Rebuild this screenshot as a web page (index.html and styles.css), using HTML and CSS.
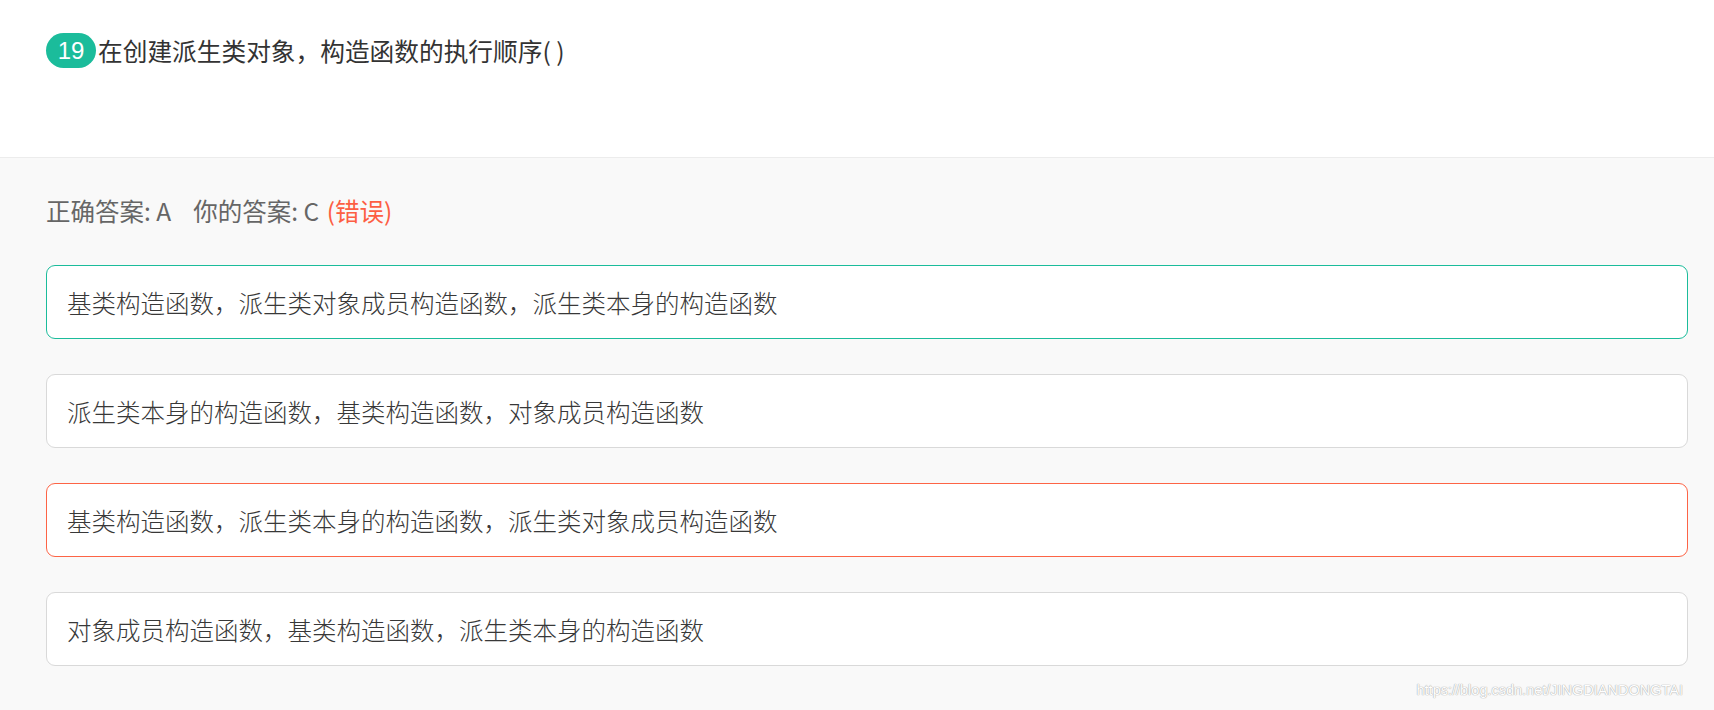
FILE: index.html
```html
<!DOCTYPE html>
<html lang="zh">
<head>
<meta charset="utf-8">
<link rel="stylesheet" href="styles.css">
</head>
<body>
<div class="page">
  <div class="question">
    <span class="num">19</span><span class="qtext">在创建派生类对象，构造函数的执行顺序( )</span>
  </div>
  <div class="answers">
    <div class="result"><span class="right">正确答案: A</span><span class="mine">你的答案: C <span class="wrong">(错误)</span></span></div>
    <div class="opt correct">基类构造函数，派生类对象成员构造函数，派生类本身的构造函数</div>
    <div class="opt">派生类本身的构造函数，基类构造函数，对象成员构造函数</div>
    <div class="opt chosen">基类构造函数，派生类本身的构造函数，派生类对象成员构造函数</div>
    <div class="opt">对象成员构造函数，基类构造函数，派生类本身的构造函数</div>
  </div>
  <div class="watermark">https://blog.csdn.net/JINGDIANDONGTAI</div>
</div>
</body>
</html>
```
FILE: styles.css
```css
html, body {
  margin: 0;
  padding: 0;
  height: 100%;
}
body {
  background: #f9f9f9;
  font-family: "Noto Sans CJK SC", "Liberation Sans", sans-serif;
}
.page {
  position: relative;
  min-height: 710px;
  background: #f9f9f9;
}
.question {
  background: #fff;
  height: 158px;
  box-sizing: border-box;
  border-bottom: 1px solid #ececec;
  padding: 33px 0 0 46px;
  display: flex;
  align-items: flex-start;
}
.num {
  display: inline-flex;
  align-items: center;
  justify-content: center;
  width: 50px;
  height: 35px;
  border-radius: 17.5px;
  background: #1bbc9b;
  color: #fff;
  font-family: "Liberation Sans", sans-serif;
  font-size: 24px;
}
.qtext {
  font-size: 24.7px;
  line-height: 35px;
  color: #333;
  margin-left: 2px;
}
.answers {
  padding: 35px 26px 0 46px;
}
.result {
  font-size: 24.5px;
  line-height: 36px;
  color: #666;
  margin-bottom: 36px;
}
.result .mine {
  margin-left: 22px;
}
.result .wrong {
  color: #fd5e43;
  margin-left: 2px;
}
.opt {
  height: 74px;
  box-sizing: border-box;
  border: 1px solid #d9d9d9;
  border-radius: 9px;
  background: #fff;
  display: flex;
  align-items: center;
  padding-left: 20px;
  font-family: "Liberation Serif", "Noto Sans CJK SC", serif;
  font-size: 24.5px;
  font-weight: 300;
  color: #383838;
  margin-bottom: 35px;
}
.opt.correct {
  border-color: #1bbc9b;
}
.opt.chosen {
  border-color: #fd6446;
}
.watermark {
  position: absolute;
  right: 31px;
  top: 682px;
  font-family: "Liberation Sans", sans-serif;
  font-size: 14.5px;
  color: #fff;
  text-shadow: 0 0 1px #9a9a9a, 0 0 1px #9a9a9a;
  opacity: 0.85;
}
```
